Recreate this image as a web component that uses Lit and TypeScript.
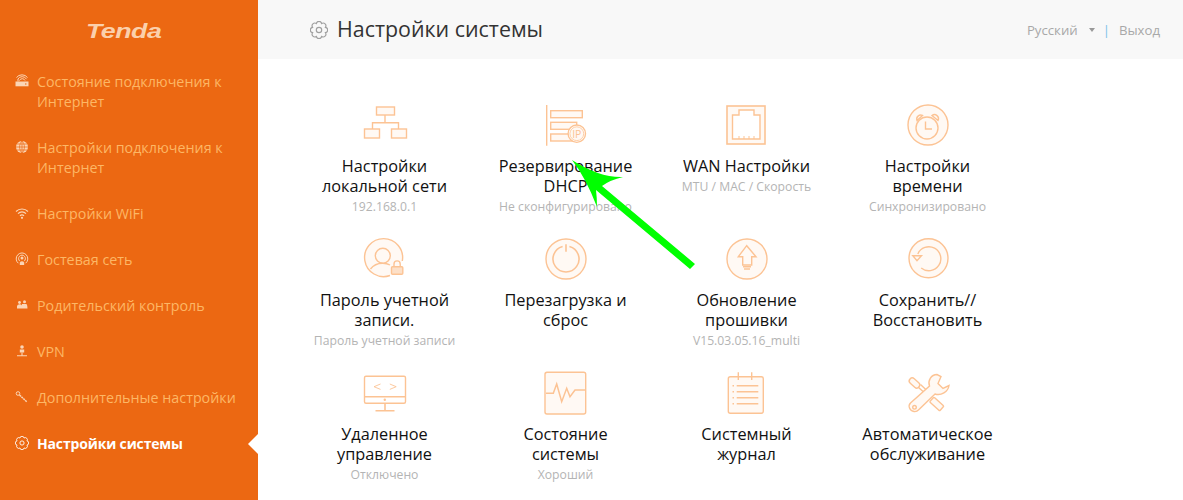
import { LitElement, html, svg, css } from "lit";
import { customElement } from "lit/decorators.js";

const gear = svg`<path d="M11.990 4.930A2.100 2.100 0 0 1 11.990 9.070A2.100 2.100 0 0 1 9.070 11.990A2.100 2.100 0 0 1 4.930 11.990A2.100 2.100 0 0 1 2.010 9.070A2.100 2.100 0 0 1 2.010 4.930A2.100 2.100 0 0 1 4.930 2.010A2.100 2.100 0 0 1 9.070 2.010A2.100 2.100 0 0 1 11.990 4.930Z" fill="none" stroke="currentColor" stroke-width=".9"/><circle cx="7" cy="7" r="2.100" fill="none" stroke="currentColor" stroke-width=".9"/>`;

const navIcons = {
  router: svg`<path d="M0.500 7.500h13v4.800H0.500z" fill="currentColor"/><path d="M3 7.500V5M4.500 6.500A3 3 0 0 1 10 6.500M2.800 5.200A5 5 0 0 1 11.500 5.200M1.500 3.500A7 7 0 0 1 12.500 3.500" fill="none" stroke="currentColor" stroke-width="1"/><circle cx="10.800" cy="10" r=".7" fill="#ec6812"/>`,
  globe: svg`<circle cx="7" cy="7" r="6" fill="currentColor"/><path d="M1 7h12M7 1v12M2 4h10M2 10h10M7 1C3.800 4 3.800 10 7 13M7 1c3.200 3 3.200 9 0 12" fill="none" stroke="#ec6812" stroke-width=".7"/>`,
  wifi: svg`<path d="M1 5.500A8.500 8.500 0 0 1 13 5.500M3 7.700A5.500 5.500 0 0 1 11 7.700M5 9.800A2.700 2.700 0 0 1 9 9.800" fill="none" stroke="currentColor" stroke-width="1.200"/><circle cx="7" cy="11.800" r="1.100" fill="currentColor"/>`,
  guest: svg`<path d="M3.300 11.200A5.800 5.800 0 1 1 10.700 11.200M4.900 9.200A3.400 3.400 0 1 1 9.100 9.200" fill="none" stroke="currentColor" stroke-width="1"/><circle cx="7" cy="6.100" r="1.500" fill="currentColor"/><path d="M4.800 13V10.500Q7 7.800 9.200 10.500V13Z" fill="currentColor"/>`,
  parent: svg`<circle cx="4.500" cy="4.500" r="1.400" fill="currentColor"/><circle cx="9.500" cy="3.800" r="1.500" fill="currentColor"/><path d="M2 10.500V8Q2.500 6.300 4.500 6.300T7 7.500V6H11.500Q12.500 7 12.500 10.500Z" fill="currentColor"/>`,
  vpn: svg`<circle cx="7" cy="3" r="1.800" fill="currentColor"/><path d="M4.800 8.500V5.500H9.200V8.500Z" fill="currentColor"/><path d="M7 8.500v3M2 11.800h10" fill="none" stroke="currentColor" stroke-width="1.100"/>`,
  wrench: svg`<circle cx="3" cy="3.500" r="1.800" fill="none" stroke="currentColor" stroke-width="1"/><path d="M4.500 5l7.500 7" fill="none" stroke="currentColor" stroke-width="1.500" stroke-dasharray="2 .6"/>`,
  gear,
};

const icons = {
  network: svg`<g class="ln"><path d="M23 13v7.700M10.500 27v-6.300h26V27"/><rect class="fl" x="14.500" y="5" width="18" height="8"/><rect class="fl" x="2.500" y="27" width="15" height="9"/><rect class="fl" x="29.500" y="27" width="15" height="9"/></g>`,
  dhcp: svg`<g class="ln"><path d="M3.700 3v40.700"/><rect class="fl" x="7.700" y="8.700" width="31.600" height="7"/><rect class="fl" x="7.700" y="20.300" width="26" height="7"/><rect class="fl" x="7.700" y="32" width="22" height="7"/><circle cx="33.800" cy="31.700" r="8.700" fill="#fff"/><circle cx="33.800" cy="31.700" r="6.900" fill="#fff9f4" stroke-width=".8"/></g><text class="ip" x="33.800" y="35.500" text-anchor="middle">IP</text>`,
  wan: svg`<g class="ln"><rect class="fl" x="3" y="4" width="38" height="38" stroke-width="1.600"/><path d="M8.500 37V13H15V8H30V13H36V37Z" fill="#fff"/><path d="M15 34v3M20 34v3M25 34v3M30 34v3" stroke-width="1"/></g>`,
  clock: svg`<g class="ln"><circle class="fl" cx="23" cy="23" r="20"/><circle cx="22" cy="26" r="11" fill="#fff9f4"/><path d="M12 18.500A4 4 0 0 1 17.500 13.500ZM33 18.500A4 4 0 0 0 27 13.500Z"/><path d="M20.500 19.500V27H27"/></g>`,
  user: svg`<g class="ln"><path class="fl" d="M40.300 25A19 19 0 1 0 28 39.500"/><circle cx="20.800" cy="19.700" r="7.500"/><path d="M8.500 33Q13 27 20.800 27.200Q25 27.200 28 29"/><rect x="29.500" y="30.700" width="11.300" height="7.600" rx="1" fill="#fde0c8"/><path d="M32 30.500V28A3.100 3.100 0 0 1 38.200 28V30.500"/></g>`,
  power: svg`<g class="ln"><circle class="fl" cx="23" cy="23" r="20"/><path d="M26.400 10.400A13 13 0 1 1 19.600 10.400M23 8.300v7.400" stroke-width="1.600"/></g>`,
  update: svg`<g class="ln"><circle class="fl" cx="23" cy="23" r="20"/><path d="M22.700 9.700L14.300 20.700H18.700V29H27.700V20.700H32Z"/><path d="M19 30.800h8M20 33h6"/></g>`,
  restore: svg`<g class="ln"><circle class="fl" cx="23.500" cy="22.300" r="19.500"/><path d="M12.800 18A12 12 0 1 1 16.200 32M7.800 19.700H16.500L12 24.700Z"/></g>`,
  monitor: svg`<g class="ln"><rect x="2.500" y="6.300" width="41" height="27" rx="1.500"/><path d="M2.500 26.700h41M23 33.300v7.400M13.500 40.700h19" stroke-width="1.600"/><path d="M18.500 14L12 16.700L18.500 19.400M27.800 14L34.200 16.700L27.800 19.400" stroke-width=".9"/></g><circle class="dot" cx="22.800" cy="29.800" r="1.200"/>`,
  pulse: svg`<g class="ln"><rect class="fl" x="2" y="2.300" width="40.700" height="41.700" rx="2"/><path d="M3 23.300H10.300L13.700 14L18.700 31.700L23.700 18.300L27 26.700L32 20H42.700" stroke-width="1.500"/></g>`,
  log: svg`<g class="ln"><rect class="fl" x="4.300" y="6.700" width="35" height="36.600" rx="2"/><path d="M14.300 2.300V10M27.700 2.300V10M12.700 15.700H34.300M12.700 21.700H34.300M12.700 27.700H34.300M12.700 33.700H34.300"/><path d="M8.500 15.700h1.500M8.500 21.700h1.500M8.500 27.700h1.500M8.500 33.700h1.500"/></g>`,
  tools: svg`<g class="ln"><rect class="fl" x="3.500" y="10" width="12" height="6" rx="3" transform="rotate(42 9.500 13)"/><path d="M13 17L22 25M15.500 14.500L24 22.500"/><rect class="fl" x="25" y="30.700" width="13.500" height="6.500" rx="1" transform="rotate(42 31.700 34)"/><path class="fl" d="M32 4.500C26 4.500 22.500 11 24.500 16L5.500 33C2.500 36 5 41 9 41.500C11.500 42 13 40.500 14 39.500L30 24C36 26 43 22 44 15.500L38 18.500L33 13.500L36 6.500Z" fill="#fff"/><circle cx="9.500" cy="37.300" r="1.800"/></g>`,
};

const navItems = [
  ["router", "Состояние подключения к Интернет"],
  ["globe", "Настройки подключения к Интернет"],
  ["wifi", "Настройки WiFi"],
  ["guest", "Гостевая сеть"],
  ["parent", "Родительский контроль"],
  ["vpn", "VPN"],
  ["wrench", "Дополнительные настройки"],
  ["gear", "Настройки системы"],
] as const;

const tiles = [
  ["network", "Настройки локальной сети", "192.168.0.1"],
  ["dhcp", "Резервирование DHCP", "Не сконфигурировано"],
  ["wan", "WAN Настройки", "MTU / MAC / Скорость"],
  ["clock", "Настройки времени", "Синхронизировано"],
  ["user", "Пароль учетной записи.", "Пароль учетной записи"],
  ["power", "Перезагрузка и сброс", ""],
  ["update", "Обновление прошивки", "V15.03.05.16_multi"],
  ["restore", "Сохранить// Восстановить", ""],
  ["monitor", "Удаленное управление", "Отключено"],
  ["pulse", "Состояние системы", "Хороший"],
  ["log", "Системный журнал", ""],
  ["tools", "Автоматическое обслуживание", ""],
] as const;

@customElement("app-root")
export class AppRoot extends LitElement {
  static styles = css`
    :host {
      display: block;
      position: relative;
      width: 100%;
      height: 500px;
      overflow: hidden;
      background: #fff;
      font-family: "Open Sans", "Noto Sans", sans-serif;
    }
    .page { display: flex; height: 500px; }
    .side {
      width: 258px;
      flex: none;
      background: #ec6812;
      color: #fdb765;
      position: relative;
    }
    .logo {
      height: 72px;
      box-sizing: border-box;
      padding: 16px 0 0 86px;
      font: italic bold 20px/30px "Liberation Sans", sans-serif;
      letter-spacing: -0.4px;
      color: #fbd0ac;
    }
    .logo span { display: inline-block; transform: scaleX(1.340); transform-origin: left center; }
    .nav { display: flex; flex-direction: column; gap: 26px; }
    .item {
      display: flex;
      gap: 8px;
      padding-left: 15px;
      padding-right: 20px;
      font-size: 14.300px;
      line-height: 20px;
      position: relative;
    }
    .item svg { width: 14px; height: 14px; flex: none; margin-top: 2px; color: #fbd5b5; }
    .item.active { color: #fff; font-weight: 700; font-size: 14px; letter-spacing: -0.15px; }
    .item.active svg { color: #fff; }
    .item.active::after {
      content: "";
      position: absolute;
      right: 0;
      top: 0;
      border: solid transparent;
      border-width: 10px 10px 10px 0;
      border-right-color: #fff;
    }
    .main { flex: 1; min-width: 0; }
    .head {
      height: 59px;
      background: #f8f8f8;
      display: flex;
      align-items: center;
      padding: 0 23px 0 52px;
    }
    .head svg.gear { width: 18px; height: 18px; margin-right: 9px; color: #a0a0a0; }
    .title { font-size: 21.400px; line-height: 26px; margin-top: -1px; color: #333; flex: 1; }
    .tools { display: flex; align-items: center; font-size: 13.200px; color: #a8a8a8; }
    .caret {
      border: solid transparent;
      border-width: 4px 3.500px 0;
      border-top-color: #999;
      margin: 1px 8px 0 11px;
    }
    .sep { color: #7cc0e8; margin-right: 9px; }
    .grid {
      display: grid;
      grid-template-columns: repeat(4, 181px);
      grid-auto-rows: 134px;
      padding: 43px 0 0 36px;
    }
    .tile { display: flex; flex-direction: column; align-items: center; text-align: center; }
    .tile svg { width: 46px; height: 46px; display: block; }
    .name {
      margin-top: 8px;
      width: 140px;
      font-size: 16.300px;
      line-height: 20px;
      color: #111;
    }
    .sub { margin-top: 2px; font-size: 12.200px; line-height: 18px; color: #b4b4b4; white-space: nowrap; }
    .ln { fill: none; stroke: #fcc394; stroke-width: 1.400; }
    .fl { fill: #fff9f4; }
    .dot { fill: #fcc394; }
    .ip { font: 10.500px "Open Sans", sans-serif; fill: #fcc394; }
    .arrow { position: absolute; left: 0; top: 0; width: 1183px; height: 500px; pointer-events: none; }
  `;

  render() {
    return html`
      <div class="page">
        <aside class="side">
          <div class="logo"><span>Tenda</span></div>
          <nav class="nav">
            ${navItems.map(
              ([ic, label], i) => html`
                <div class="item ${i === navItems.length - 1 ? "active" : ""}">
                  <svg viewBox="0 0 14 14">${navIcons[ic]}</svg>
                  <span>${label}</span>
                </div>
              `
            )}
          </nav>
        </aside>
        <main class="main">
          <header class="head">
            <svg class="gear" viewBox="0 0 14 14">${navIcons.gear}</svg>
            <div class="title">Настройки системы</div>
            <div class="tools">
              <span>Русский</span><i class="caret"></i><span class="sep">|</span><span>Выход</span>
            </div>
          </header>
          <section class="grid">
            ${tiles.map(
              ([ic, name, sub]) => html`
                <div class="tile">
                  <svg viewBox="0 0 46 46">${icons[ic]}</svg>
                  <div class="name">${name}</div>
                  ${sub ? html`<div class="sub">${sub}</div>` : ""}
                </div>
              `
            )}
          </section>
        </main>
      </div>
      <svg class="arrow" viewBox="0 0 1183 500">
        <path fill="#00ff00" d="M572 160Q600 178 623 177Q610 180 602 186L695 264L690 269L596 190Q597 198 597 207Q586 178 572 160Z"/>
      </svg>
    `;
  }
}
